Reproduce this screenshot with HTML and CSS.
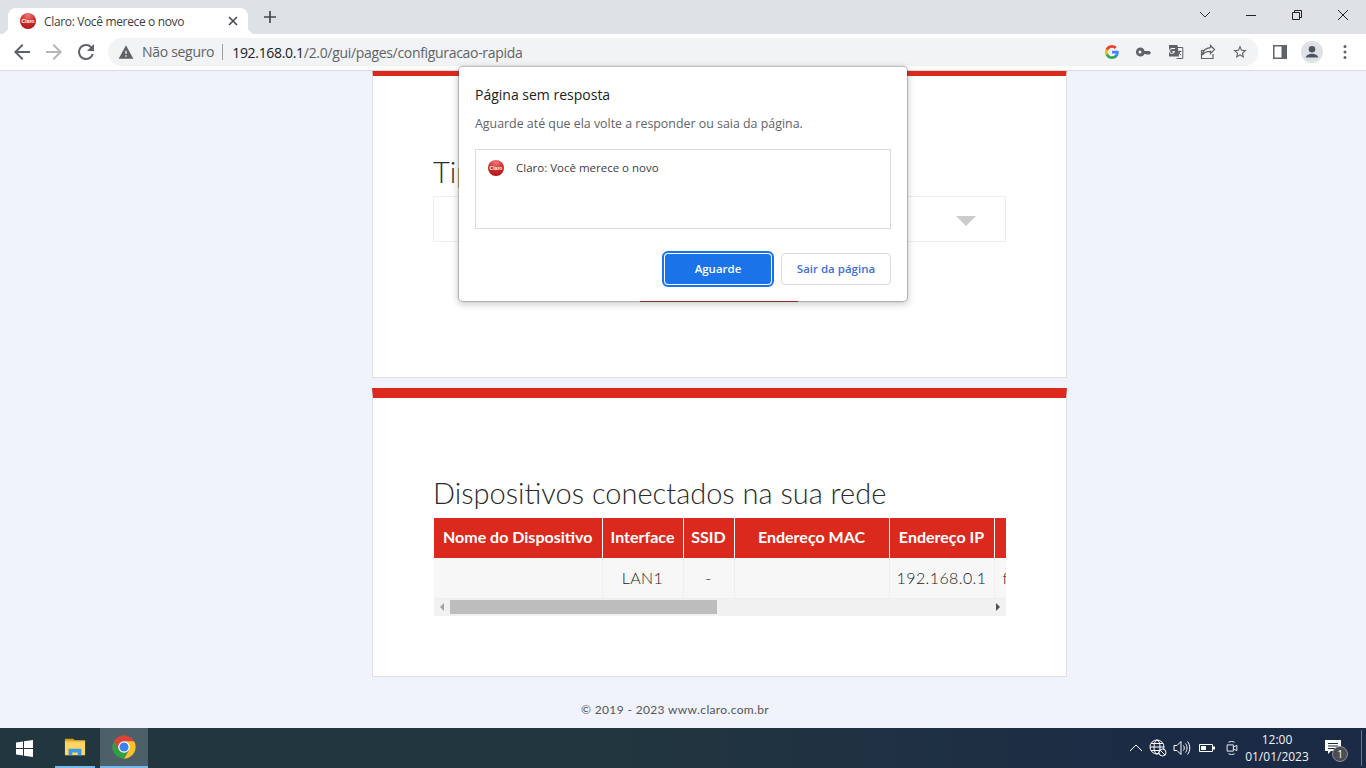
FILE: index.html
```html
<!DOCTYPE html>
<html lang="pt-BR">
<head>
    <meta charset="utf-8">
    <title>Claro: Você merece o novo</title>
    <link rel="stylesheet" href="styles.css">
</head>
<body>
    <div class="tabstrip">
        <div class="tab">
            <svg class="favicon" viewBox="0 0 16 16"><defs><radialGradient id="fav" cx="0.5" cy="0.15" r="0.9"><stop offset="0" stop-color="#f0797a"/><stop offset="0.5" stop-color="#d22c30"/><stop offset="1" stop-color="#a81418"/></radialGradient></defs><circle cx="8" cy="8" r="8" fill="url(#fav)"/><text class="fav_text" x="8" y="9.500" text-anchor="middle">Claro</text></svg>
            <span class="tab_title">Claro: Você merece o novo</span>
            <svg class="tab_close" viewBox="0 0 10 10"><path d="M1 1l8 8M9 1l-8 8" stroke="#45484d" stroke-width="1.6" fill="none"/></svg>
        </div>
        <svg class="new_tab" viewBox="0 0 12 12"><path d="M6 0v12M0 6h12" stroke="#45484d" stroke-width="1.7" fill="none"/></svg>
        <div class="win_controls">
            <svg class="win_icon" viewBox="0 0 46 20"><path d="M18 7l5 5 5-5" stroke="#333" fill="none"/></svg>
            <svg class="win_icon" viewBox="0 0 46 20"><path d="M18 10.5h10" stroke="#222" fill="none"/></svg>
            <svg class="win_icon" viewBox="0 0 46 20"><path d="M18.5 7.5h7v7h-7zM20.5 7.5v-2h7v7h-2" stroke="#222" fill="none"/></svg>
            <svg class="win_icon" viewBox="0 0 46 20"><path d="M18 5l10 10M28 5l-10 10" stroke="#222" fill="none"/></svg>
        </div>
    </div>

    <div class="toolbar">
        <svg class="nav_icon" viewBox="0 0 24 24"><path fill="#5f6368" d="M20 11H7.8l5.6-5.6L12 4l-8 8 8 8 1.4-1.4L7.8 13H20z"/></svg>
        <svg class="nav_icon" viewBox="0 0 24 24"><path fill="#b4b6b9" d="M4 11h12.2l-5.6-5.6L12 4l8 8-8 8-1.4-1.4 5.6-5.6H4z"/></svg>
        <svg class="nav_icon" viewBox="0 0 24 24"><path fill="#5f6368" d="M17.65 6.35A7.96 7.96 0 0 0 12 4a8 8 0 1 0 7.73 10h-2.08A6 6 0 1 1 12 6c1.66 0 3.14.69 4.22 1.78L13 11h7V4l-2.35 2.35z"/></svg>
        <div class="omnibox">
            <svg class="warn_icon" viewBox="0 0 24 24"><path fill="#5f6368" d="M1 22h22L12 2 1 22zm12-3h-2v-2h2v2zm0-4h-2v-5h2v5z"/></svg>
            <span class="not_secure">Não seguro</span>
            <span class="url"><span class="url_host">192.168.0.1</span>/2.0/gui/pages/configuracao-rapida</span>
            <div class="omni_icons">
                <svg class="omni_icon" viewBox="0 0 16 16"><path fill="#4285f4" d="M14.7 8.2c0-.5 0-1-.1-1.4H8v2.7h3.8c-.2.9-.7 1.6-1.4 2.1v1.7h2.3c1.3-1.2 2-3 2-5.1z"/><path fill="#34a853" d="M8 15c1.9 0 3.5-.6 4.7-1.7l-2.3-1.7c-.6.4-1.4.7-2.4.7-1.8 0-3.4-1.2-3.9-2.9H1.7v1.8C2.9 13.4 5.3 15 8 15z"/><path fill="#fbbc05" d="M4.1 9.4c-.3-.9-.3-1.9 0-2.8V4.8H1.7c-1 1.9-1 4.4 0 6.4z"/><path fill="#ea4335" d="M8 3.8c1 0 2 .4 2.7 1.1l2-2C11.5 1.700 9.800 1 8 1 5.300 1 2.900 2.600 1.700 4.800l2.400 1.800C4.600 5 6.200 3.800 8 3.800z"/></svg>
                <svg class="omni_icon" viewBox="0 0 16 16"><path fill="#5f6368" d="M4.500 3.500a4.500 4.500 0 1 0 4 6.500H10l1 1 1-1 1 1 2-2.300L13.500 7h-5a4.500 4.500 0 0 0-4-3.500zM4 6.500a1.500 1.500 0 1 1 0 3 1.500 1.500 0 0 1 0-3z"/></svg>
                <svg class="omni_icon" viewBox="0 0 16 16"><path fill="none" stroke="#5f6368" d="M6.500 3.500h8.300v11H8.500"/><path fill="#5f6368" d="M1 1h8.500l1.500 11.500H1z"/><path fill="none" stroke="#fff" d="M7 4.500H4a2.500 2.500 0 1 0 2.500 3H4.500"/><path fill="none" stroke="#5f6368" d="M10 7.500h3.500M12 6.500c-.2 2-1.200 3.500-2.200 4.500M10.500 8.500c.5 1 1.500 2 2.800 2.500"/></svg>
                <svg class="omni_icon" viewBox="0 0 16 16"><path fill="none" stroke="#5f6368" stroke-width="1.200" d="M10.500 1.500l4 4-4 4V7.300C6.500 7.300 4 8.500 2.500 11c.3-4 3-6.800 8-7.300zM13 10v4.500H1.500V6.500H4"/></svg>
                <svg class="omni_icon" viewBox="0 0 24 24"><path fill="#5f6368" d="M22 9.200l-7.200-.6L12 2 9.200 8.600 2 9.200l5.500 4.700L5.800 21l6.200-3.700 6.200 3.700-1.600-7.100L22 9.200zm-10 6.200l-3.800 2.300 1-4.300-3.300-2.900 4.400-.4L12 6.100l1.700 4 4.400.4-3.300 2.900 1 4.300-3.800-2.300z"/></svg>
            </div>
        </div>
        <svg class="side_icon" viewBox="0 0 14 14"><path fill="#5f6368" fill-rule="evenodd" d="M0 0h14v14H0zM1.500 1.500v11H8.500v-11z"/></svg>
        <svg class="avatar" viewBox="0 0 22 22"><circle cx="11" cy="11" r="11" fill="#dfe1e5"/><circle cx="11" cy="8.300" r="3.300" fill="#4b5563"/><path fill="#4b5563" d="M4.800 16.500c0-2.500 3.800-3.800 6.200-3.800s6.200 1.300 6.200 3.800z"/></svg>
        <svg class="dots" viewBox="0 0 4 16"><circle cx="2" cy="2.500" r="1.500" fill="#5f6368"/><circle cx="2" cy="8" r="1.500" fill="#5f6368"/><circle cx="2" cy="13.500" r="1.500" fill="#5f6368"/></svg>
    </div>

    <main class="page">
        <section class="card card_first">
            <h2 class="card_title">Tipo</h2>
            <div class="select_box"><span class="select_arrow"></span></div>
            <div class="hidden_button"></div>
        </section>

        <section class="card card_second">
            <h2 class="card_title">Dispositivos conectados na sua rede</h2>
            <div class="table_wrap">
                <table class="device_table">
                    <colgroup>
                        <col class="col_name"><col class="col_iface"><col class="col_ssid"><col class="col_mac"><col class="col_ip"><col class="col_last">
                    </colgroup>
                    <thead>
                        <tr><th>Nome do Dispositivo</th><th>Interface</th><th>SSID</th><th>Endereço MAC</th><th>Endereço IP</th><th></th></tr>
                    </thead>
                    <tbody>
                        <tr><td></td><td>LAN1</td><td>-</td><td></td><td>192.168.0.1</td><td class="cell_left">f</td></tr>
                    </tbody>
                </table>
            </div>
            <div class="scrollbar">
                <span class="scroll_arrow scroll_left"></span>
                <div class="scroll_track"><div class="scroll_thumb"></div></div>
                <span class="scroll_arrow scroll_right"></span>
            </div>
        </section>

        <footer class="page_footer">© 2019 - 2023 www.claro.com.br</footer>
    </main>

    <div class="dialog">
        <h3 class="dialog_title">Página sem resposta</h3>
        <p class="dialog_text">Aguarde até que ela volte a responder ou saia da página.</p>
        <div class="dialog_list">
            <svg class="favicon" viewBox="0 0 16 16"><circle cx="8" cy="8" r="8" fill="url(#fav)"/><text class="fav_text" x="8" y="9.500" text-anchor="middle">Claro</text></svg>
            <span>Claro: Você merece o novo</span>
        </div>
        <div class="dialog_buttons">
            <button class="btn btn_primary">Aguarde</button>
            <button class="btn btn_plain">Sair da página</button>
        </div>
    </div>

    <div class="taskbar">
        <svg class="start_icon" viewBox="0 0 17 17"><path fill="#fff" d="M0 2.500l7-1v6.500H0zM8 1.300L17 0v8H8zM0 9h7v6.500l-7-1zM8 9h9v8l-9-1.300z"/></svg>
        <div class="task_item task_open">
            <svg class="task_icon" viewBox="0 0 24 20"><path fill="#e0a100" d="M1 1h9l2 2h-11z"/><path fill="#ffd566" d="M1 3h22v16H1z"/><path fill="#f5c344" d="M1 3h22v2H1z"/><path fill="#3d9ae8" d="M5 19v-7h14v7h-4v-3H9v3z"/></svg>
        </div>
        <div class="task_item task_active">
            <svg class="task_icon task_chrome" viewBox="0 0 24 24"><path fill="#db4437" d="M3.340 7A10 10 0 0 1 20.660 7H12L7.670 14.500z"/><path fill="#2f9e44" d="M3.340 7A10 10 0 0 0 12 22L16.330 14.500H7.670z"/><path fill="#fbc02d" d="M20.660 7A10 10 0 0 1 12 22L16.330 14.500 12 7z"/><circle cx="12" cy="12" r="5" fill="#fff"/><circle cx="12" cy="12" r="3.900" fill="#3b82f0"/></svg>
        </div>
        <div class="tray">
            <svg class="tray_icon tray_chevron" viewBox="0 0 14 16"><path d="M1 11l6-6 6 6" stroke="#fff" fill="none"/></svg>
            <svg class="tray_icon tray_globe" viewBox="0 0 18 18"><g fill="none" stroke="#fff"><circle cx="8" cy="8" r="7"/><ellipse cx="8" cy="8" rx="3" ry="7"/><path d="M1 8h14M2 4.500h12M2 11.500h12"/></g><circle cx="13.500" cy="13.500" r="3.500" fill="#1c2b44" stroke="#fff"/><path d="M11 11l5 5" stroke="#fff"/></svg>
            <svg class="tray_icon tray_sound" viewBox="0 0 18 16"><path fill="none" stroke="#fff" d="M1 5.500h3l4-4v13l-4-4H1zM10.500 5.500c1 1.500 1 3.500 0 5M12.500 3.500c2 2.500 2 6.500 0 9M14.500 1.500c3 3.500 3 9.500 0 13"/></svg>
            <svg class="tray_icon tray_battery" viewBox="0 0 16 10"><path fill="none" stroke="#fff" d="M.5 1.500h13v7H.500z"/><path fill="#fff" d="M2 3h5v4H2zM14 3.500h2v3h-2z"/></svg>
            <svg class="tray_icon tray_meet" viewBox="0 0 14 18"><path fill="none" stroke="#fff" d="M1.500 5.500h7v7h-7zM8.500 8l4-2v6l-4-2M3 2.500c2-1 5-1 7 0M3 15.500c2 1 5 1 7 0"/></svg>
            <div class="clock"><span>12:00</span><span>01/01/2023</span></div>
            <div class="notify">
                <svg class="notify_icon" viewBox="0 0 16 15"><path fill="#fff" d="M0 0h16v11H6l-3 3v-3H0z"/><path stroke="#1c2b44" d="M3 3.500h10M3 6h10M3 8.500h7"/></svg>
                <span class="notify_badge">1</span>
            </div>
            <span class="show_desktop"></span>
        </div>
    </div>
</body>
</html>
```

FILE: styles.css
```css
* {
    padding: 0;
    margin: 0;
    box-sizing: border-box;
}
html, body {
    height: 100%;
    overflow: hidden;
}
body {
    position: relative;
    display: flex;
    flex-direction: column;
    height: 768px;
    font-family: "Open Sans", "Noto Sans", sans-serif;
    background-color: #f0f3fb;
}

/* tab strip */
.tabstrip {
    height: 34px;
    flex: none;
    display: flex;
    align-items: flex-start;
    background-color: #dee1e6;
}
.tab {
    position: relative;
    width: 240px;
    height: 26px;
    margin: 8px 0 0 8px;
    padding: 0 10px 0 12px;
    display: flex;
    align-items: center;
    background-color: #fff;
    border-radius: 8px 8px 0 0;
}
.tab::before,
.tab::after {
    content: "";
    position: absolute;
    bottom: 0;
    width: 8px;
    height: 8px;
}
.tab::before {
    left: -8px;
    background: radial-gradient(circle at 0 0, #dee1e6 8px, #fff 8.5px);
}
.tab::after {
    right: -8px;
    background: radial-gradient(circle at 100% 0, #dee1e6 8px, #fff 8.5px);
}
.favicon {
    width: 16px;
    height: 16px;
    flex: none;
}
.fav_text {
    font-family: "Liberation Sans", sans-serif;
    font-size: 5px;
    font-weight: 700;
    fill: #fff;
}
.tab_title {
    margin-left: 8px;
    flex: 1;
    font-size: 12px;
    letter-spacing: -0.35px;
    white-space: nowrap;
    color: #3c4043;
}
.tab_close {
    width: 10px;
    height: 10px;
}
.new_tab {
    width: 12px;
    height: 12px;
    margin: 11px 0 0 16px;
}
.win_controls {
    margin-left: auto;
    display: flex;
}
.win_icon {
    width: 46px;
    height: 20px;
    margin-top: 5px;
}

/* toolbar */
.toolbar {
    height: 37px;
    flex: none;
    display: flex;
    align-items: center;
    padding-left: 10px;
    background-color: #fff;
    border-bottom: 1px solid #dadce0;
}
.nav_icon {
    width: 24px;
    height: 24px;
    margin-right: 8px;
    flex: none;
}
.omnibox {
    width: 1150px;
    height: 28px;
    margin-left: 2px;
    padding: 0 10px;
    display: flex;
    align-items: center;
    border-radius: 14px;
    background-color: #f1f3f4;
    font-size: 14px;
    white-space: nowrap;
}
.warn_icon {
    width: 16px;
    height: 16px;
    flex: none;
}
.not_secure {
    margin-left: 8px;
    padding-right: 8px;
    border-right: 1px solid #9aa0a6;
    line-height: 16px;
    letter-spacing: -0.3px;
    color: #5f6368;
}
.url {
    margin-left: 9px;
    letter-spacing: -0.32px;
    color: #5f6368;
}
.url_host {
    color: #202124;
}
.omni_icons {
    margin-left: auto;
    display: flex;
    gap: 16px;
    align-items: center;
}
.omni_icon {
    width: 16px;
    height: 16px;
}
.side_icon {
    width: 14px;
    height: 14px;
    margin-left: 15px;
}
.avatar {
    width: 22px;
    height: 22px;
    margin-left: 14px;
}
.dots {
    width: 4px;
    height: 16px;
    margin-left: 20px;
}

/* page */
.page {
    flex: 1;
    min-height: 0;
    overflow: hidden;
    display: flex;
    flex-direction: column;
    align-items: flex-start;
    font-family: Lato, "Open Sans", sans-serif;
    color: #2b2b2b;
}
.card {
    width: 695px;
    margin-left: 372px;
    padding: 0 60px 0 61px;
    background-color: #fff;
    border: 1px solid #dfdfe3;
    border-top: 10px solid #dc291e;
}
.card_first {
    height: 312px;
    margin-top: -5px;
    padding-top: 76px;
}
.card_second {
    height: 289px;
    margin-top: 10px;
    padding-top: 75px;
}
.card_title {
    height: 45px;
    margin-left: -1px;
    font-size: 29px;
    line-height: 40px;
    font-weight: 300;
    white-space: nowrap;
}
.card_first .card_title {
    height: 38px;
}
.select_box {
    position: relative;
    height: 46px;
    margin: 6px 0 0 -1px;
    border: 1px solid #eee;
}
.select_arrow {
    position: absolute;
    right: 29px;
    top: 19px;
    border-style: solid;
    border-width: 10px 10px 0;
    border-color: #ccc transparent transparent;
}
.hidden_button {
    width: 158px;
    height: 42px;
    margin: 18px 0 0 206px;
    background-color: #c0281c;
}
.table_wrap {
    width: 572px;
    overflow: hidden;
}
.device_table {
    width: 660px;
    table-layout: fixed;
    border-collapse: collapse;
    font-size: 16px;
    font-weight: 300;
    color: #222;
}
.col_name { width: 168px; }
.col_iface { width: 81px; }
.col_ssid { width: 51px; }
.col_mac { width: 155px; }
.col_ip { width: 105px; }
.device_table th {
    height: 40px;
    padding-bottom: 3px;
    background-color: #dc291e;
    border-right: 1px solid #fff;
    color: #fff;
    font-size: 16px;
    font-weight: 700;
    white-space: nowrap;
}
.device_table td {
    height: 40px;
    background-color: #f7f7f7;
    border-right: 1px solid #eee;
    border-bottom: 1px solid #eee;
    text-align: center;
    letter-spacing: 0.4px;
}
.device_table td.cell_left {
    padding-left: 8px;
    text-align: left;
}
.scrollbar {
    width: 572px;
    height: 17px;
    display: flex;
    align-items: center;
    background-color: #f1f1f1;
}
.scroll_arrow {
    width: 16px;
    flex: none;
    display: flex;
    justify-content: center;
}
.scroll_arrow::before {
    content: "";
    border-style: solid;
    border-width: 4px 0;
    border-color: transparent;
}
.scroll_left::before {
    border-right: 4px solid #a3a3a3;
}
.scroll_right::before {
    border-left: 4px solid #505050;
}
.scroll_track {
    flex: 1;
    height: 14px;
}
.scroll_thumb {
    width: 267px;
    height: 14px;
    background-color: #bdbdbd;
}
.page_footer {
    align-self: center;
    margin-top: 25px;
    margin-right: 16px;
    font-size: 12px;
    letter-spacing: 0.35px;
    color: #555;
}

/* dialog over the page */
.dialog {
    position: absolute;
    top: 67px;
    left: 459px;
    width: 448px;
    height: 234px;
    padding: 16px;
    background-color: #fff;
    border-radius: 4px;
    box-shadow: 0 0 1px 1px rgba(60, 64, 67, 0.3), 0 2px 6px 2px rgba(60, 64, 67, 0.22);
}
.dialog_title {
    font-size: 14px;
    line-height: 24px;
    font-weight: 400;
    color: #202124;
}
.dialog_text {
    margin-top: 8px;
    font-size: 12.4px;
    line-height: 18px;
    color: #5f6368;
}
.dialog_list {
    height: 80px;
    margin-top: 16px;
    padding: 10px 12px;
    display: flex;
    align-items: flex-start;
    gap: 12px;
    border: 1px solid #dadce0;
    font-size: 11.5px;
    line-height: 16px;
    color: #3c4043;
}
.dialog_buttons {
    margin-top: 24px;
    display: flex;
    justify-content: flex-end;
    gap: 9px;
}
.btn {
    height: 32px;
    padding-bottom: 2px;
    border-radius: 4px;
    font-family: inherit;
    font-size: 11.5px;
    font-weight: 600;
}
.btn_primary {
    width: 108px;
    color: #fff;
    background-color: #1a73e8;
    border: 1px solid #fff;
    outline: 2px solid #1a73e8;
}
.btn_plain {
    width: 110px;
    color: #3f6fdc;
    background-color: #fff;
    border: 1px solid #dadce0;
}

/* taskbar */
.taskbar {
    height: 40px;
    flex: none;
    display: flex;
    align-items: center;
    background: linear-gradient(90deg, #22363f, #22363f 45%, #1b2b45 85%);
}
.start_icon {
    width: 17px;
    height: 17px;
    margin-left: 16px;
}
.task_item {
    height: 40px;
    display: flex;
    align-items: center;
    justify-content: center;
    border-bottom: 2px solid #76b9ed;
}
.task_open {
    width: 40px;
    margin-left: 22px;
}
.task_active {
    width: 48px;
    margin-left: 5px;
    background-color: #4d6068;
}
.task_icon {
    width: 22px;
    height: 20px;
}
.task_chrome {
    width: 28px;
    height: 28px;
}
.tray {
    margin-left: auto;
    display: flex;
    align-items: center;
    height: 40px;
}
.tray_icon {
    width: 14px;
    height: 16px;
    margin-right: 10px;
}
.tray_chevron {
    margin-right: 6px;
}
.tray_globe {
    width: 18px;
    height: 18px;
    margin-right: 6px;
}
.tray_sound {
    width: 18px;
    margin-right: 8px;
}
.tray_battery {
    width: 16px;
    height: 10px;
}
.tray_meet {
    margin-right: 1px;
}
.clock {
    width: 70px;
    display: flex;
    flex-direction: column;
    align-items: center;
    gap: 2px;
    margin-left: 2px;
    font-size: 12px;
    line-height: 15px;
    color: #f0f3f7;
}
.notify {
    position: relative;
    width: 16px;
    height: 16px;
    margin-left: 13px;
}
.notify_icon {
    width: 16px;
    height: 15px;
    display: block;
}
.notify_badge {
    position: absolute;
    top: 6px;
    left: 7px;
    width: 16px;
    height: 16px;
    border-radius: 50%;
    background-color: #4b4f55;
    border: 1px solid #8a8f96;
    color: #fff;
    font-size: 10px;
    line-height: 14px;
    text-align: center;
}
.show_desktop {
    width: 1px;
    height: 36px;
    margin-left: 20px;
    margin-right: 4px;
    background-color: #6b7686;
}
```
